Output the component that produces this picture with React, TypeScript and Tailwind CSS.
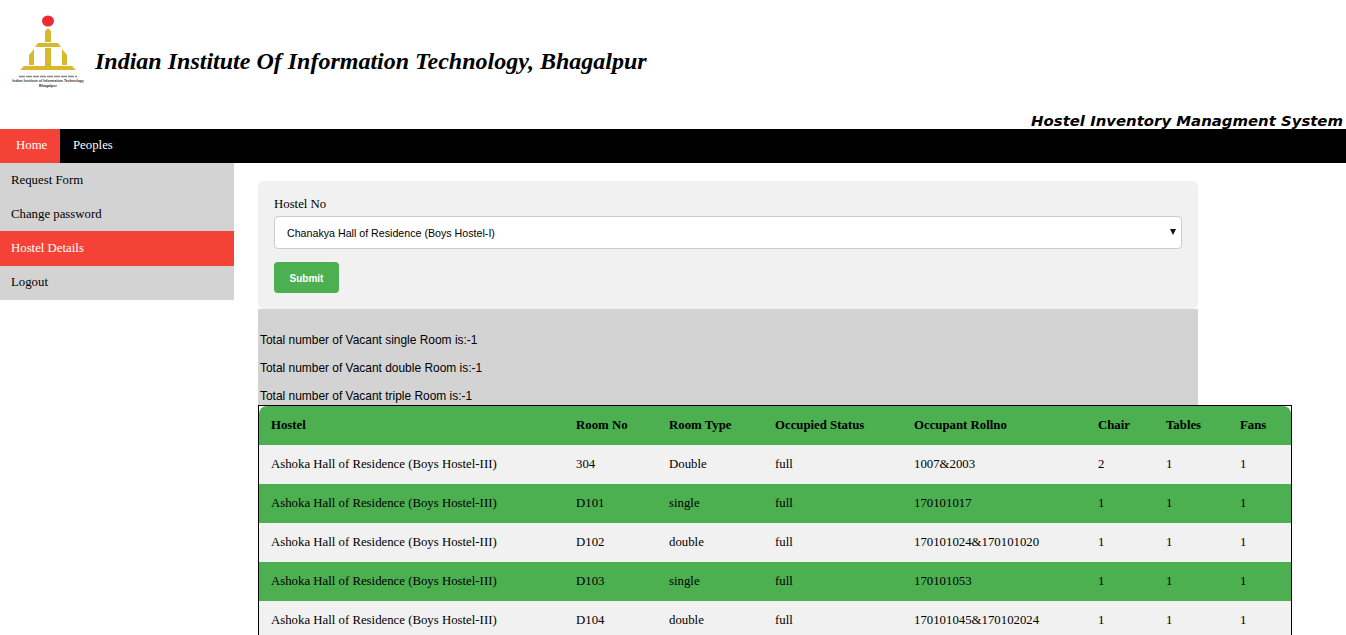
const sideLinks = ["Request Form", "Change password", "Hostel Details", "Logout"];

const columns = ["Hostel", "Room No", "Room Type", "Occupied Status", "Occupant Rollno", "Chair", "Tables", "Fans"];

const rows = [
  ["Ashoka Hall of Residence (Boys Hostel-III)", "304", "Double", "full", "1007&2003", "2", "1", "1"],
  ["Ashoka Hall of Residence (Boys Hostel-III)", "D101", "single", "full", "170101017", "1", "1", "1"],
  ["Ashoka Hall of Residence (Boys Hostel-III)", "D102", "double", "full", "170101024&170101020", "1", "1", "1"],
  ["Ashoka Hall of Residence (Boys Hostel-III)", "D103", "single", "full", "170101053", "1", "1", "1"],
  ["Ashoka Hall of Residence (Boys Hostel-III)", "D104", "double", "full", "170101045&170102024", "1", "1", "1"],
];

const stats = ["single", "double", "triple"];

function Logo() {
  return (
    <svg width="96" height="92" viewBox="0 0 96 92" className="shrink-0">
      <ellipse cx="48" cy="21" rx="6" ry="5.5" fill="#ed2b33" />
      <g fill="#d9b92c">
        <path d="M45 31 L48 28 L51 31 V42 H45 Z" />
        <path d="M38 43 H58 L61 47 H35 Z" />
        <rect x="45" y="48" width="6" height="19" />
        <path d="M29 55 L34 49 V65 H29 Z" />
        <path d="M62 49 L67 55 V65 H62 Z" />
        <path d="M24 66 H72 L76 70 H20 Z" />
      </g>
      <line x1="19" y1="76.5" x2="77" y2="76.5" stroke="#888" strokeWidth="1.6" strokeDasharray="6 1" />
      <text x="48" y="82" textAnchor="middle" fontSize="3.6" fontWeight="700" fill="#333" fontFamily="'Liberation Sans', sans-serif">
        Indian Institute of Information Technology
      </text>
      <text x="48" y="87" textAnchor="middle" fontSize="3.6" fontWeight="700" fill="#333" fontFamily="'Liberation Sans', sans-serif">
        Bhagalpur
      </text>
    </svg>
  );
}

export default function App() {
  return (
    <div className="h-screen overflow-hidden bg-white font-['Liberation_Serif',serif] text-[12.8px] text-black">
      <header className="h-[129px] flex flex-col">
        <div className="flex items-start h-[113px]">
          <Logo />
          <h1 className="text-[24px] font-bold italic leading-[28px] -ml-[1px] mt-[47px]">
            Indian Institute Of Information Technology, Bhagalpur
          </h1>
        </div>
        <p className="text-right pr-[3px] font-['DejaVu_Sans',sans-serif] text-[14.9px] font-bold italic leading-[16px]">
          Hostel Inventory Managment System
        </p>
      </header>

      <nav className="flex h-[34px] bg-black text-white">
        <a className="flex items-center px-[16px] w-[60px] bg-[#f44336]">Home</a>
        <a className="flex items-center px-[13px]">Peoples</a>
      </nav>

      <div className="flex">
        <aside className="w-[234px] shrink-0 self-start bg-[#d3d3d3]">
          {sideLinks.map((link, i) => (
            <a
              key={link}
              className={
                link === "Hostel Details"
                  ? "flex items-center h-[35px] px-[11px] bg-[#f44336] text-white"
                  : i < 2
                    ? "flex items-center h-[34px] px-[11px] pt-[2px]"
                    : "flex items-center h-[34px] px-[11px]"
              }
            >
              {link}
            </a>
          ))}
        </aside>

        <main className="ml-[24px] pt-[18px] w-[1034px]">
          <form className="w-[940px] h-[128px] bg-[#f1f1f1] rounded-[5px] px-[16px] pt-[16px]">
            <label className="block leading-[15px] mb-[4px]">Hostel No</label>
            <div className="relative">
              <select className="block w-full h-[33px] pl-[12px] appearance-none bg-white border border-[#ccc] rounded-[4px] font-['Liberation_Sans',sans-serif] text-[10.67px]">
                <option>Chanakya Hall of Residence (Boys Hostel-I)</option>
              </select>
              <svg width="6" height="6" viewBox="0 0 6 6" className="absolute right-[6px] top-[13px]">
                <path d="M0 0 H6 L3 6 Z" fill="#111" />
              </svg>
            </div>
            <button
              type="button"
              className="block mt-[13px] w-[65px] h-[31px] pt-[2px] bg-[#4caf50] rounded-[4px] text-white font-['Liberation_Sans',sans-serif] text-[10px] font-bold"
            >
              Submit
            </button>
          </form>

          <div className="w-[940px] h-[96px] bg-[#d3d3d3] pt-[24px] pl-[2px] flex flex-col gap-[14px] font-['Liberation_Sans',sans-serif] text-[11.95px] leading-[14px]">
            {stats.map((s) => (
              <p key={s}>Total number of Vacant {s} Room is:-1</p>
            ))}
          </div>

          <table className="w-[1034px] table-fixed border-separate border-spacing-0 border border-black bg-white">
            <colgroup>
              <col className="w-[305px]" />
              <col className="w-[93px]" />
              <col className="w-[106px]" />
              <col className="w-[139px]" />
              <col className="w-[184px]" />
              <col className="w-[68px]" />
              <col className="w-[74px]" />
              <col />
            </colgroup>
            <thead>
              <tr>
                {columns.map((c, i) => (
                  <th
                    key={c}
                    className={
                      i === 0
                        ? "h-[39px] bg-[#4caf50] pl-[12px] text-left font-bold rounded-tl-[8px]"
                        : i === columns.length - 1
                          ? "h-[39px] bg-[#4caf50] pl-[12px] text-left font-bold rounded-tr-[8px]"
                          : "h-[39px] bg-[#4caf50] pl-[12px] text-left font-bold"
                    }
                  >
                    {c}
                  </th>
                ))}
              </tr>
            </thead>
            <tbody>
              {rows.map((row, r) => (
                <tr key={r} className={r % 2 === 0 ? "bg-[#f1f1f1]" : "bg-[#4caf50]"}>
                  {row.map((cell, i) => (
                    <td key={i} className="h-[39px] pl-[12px] whitespace-nowrap">
                      {cell}
                    </td>
                  ))}
                </tr>
              ))}
            </tbody>
          </table>
        </main>
      </div>
    </div>
  );
}
